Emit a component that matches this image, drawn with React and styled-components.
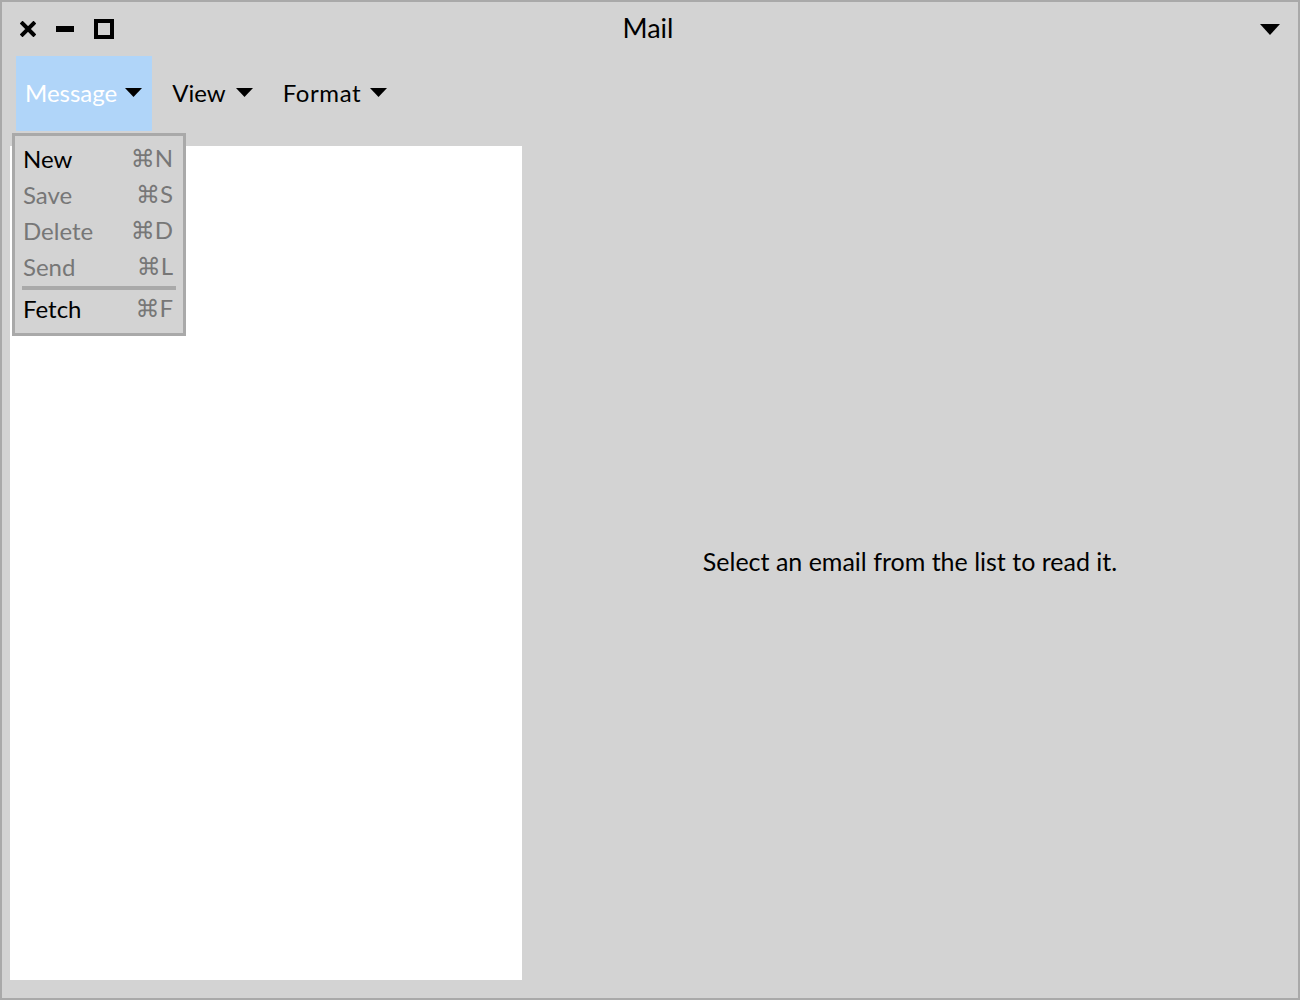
import React from "react";
import styled, { createGlobalStyle } from "styled-components";

const GlobalStyle = createGlobalStyle`
  html, body {
    margin: 0;
    padding: 0;
    background: #d3d3d3;
  }
  body {
    font-family: "Lato", "DejaVu Sans", sans-serif;
  }
`;

const Window = styled.div`
  position: relative;
  width: 1300px;
  height: 1000px;
  box-sizing: border-box;
  border: 2px solid #a9a9a9;
  background: #d3d3d3;
  display: flex;
  flex-direction: column;
  color: #000;
`;

const TitleBar = styled.div`
  height: 54px;
  display: grid;
  grid-template-columns: 1fr auto 1fr;
  align-items: center;
  padding: 0 18px;
`;

const Controls = styled.div`
  display: flex;
  align-items: center;
  gap: 20px;
`;

const Title = styled.div`
  font-size: 27px;
  line-height: 1;
  margin: 0 4px 4px 0;
`;

const TitleMenu = styled.div`
  display: flex;
  justify-content: flex-end;
`;

const MenuBar = styled.div`
  display: flex;
  height: 75px;
  padding-left: 14px;
  gap: 10px;
`;

const MenuItem = styled.div`
  display: flex;
  align-items: center;
  gap: ${({ $gap }) => $gap || 9}px;
  padding: 0 10px 2px ${({ $active }) => ($active ? 9 : 10)}px;
  font-size: 24px;
  letter-spacing: ${({ $spacing }) => $spacing || 0}px;
  background: ${({ $active }) => ($active ? "#b0d5f9" : "transparent")};
  color: ${({ $active }) => ($active ? "#fff" : "#000")};
`;

const CaretWrap = styled.span`
  display: flex;
  color: #000;
`;

const Body = styled.div`
  flex: 1;
  display: flex;
  padding: 15px 0 18px 8px;
`;

const ListPane = styled.div`
  width: 512px;
  background: #fff;
`;

const ReadPane = styled.div`
  flex: 1;
  display: flex;
  align-items: center;
  justify-content: center;
  font-size: 25px;
  padding-bottom: 4px;
`;

const Popup = styled.div`
  position: absolute;
  left: 10px;
  top: 131px;
  width: 174px;
  box-sizing: border-box;
  border: 3px solid #a9a9a9;
  background: #d3d3d3;
  padding: 5px 0 6px;
`;

const PopupRow = styled.div`
  height: 36px;
  display: flex;
  align-items: center;
  justify-content: space-between;
  padding: 0 10px 2px 8px;
  box-sizing: border-box;
  font-size: 24px;
  color: ${({ $disabled }) => ($disabled ? "#777" : "#000")};
`;

const Shortcut = styled.span`
  color: #777;
  font-size: 24px;
`;

const Separator = styled.div`
  height: 4px;
  margin: 1px 7px 1px 7px;
  background: #a9a9a9;
`;

const Caret = () => (
  <svg width="17" height="9" viewBox="0 0 17 9">
    <polygon points="0,0 17,0 8.5,9" fill="currentColor" />
  </svg>
);

const CloseIcon = () => (
  <svg width="16" height="16" viewBox="0 0 16 16">
    <path d="M2.5 2.5 L13.5 13.5 M13.5 2.5 L2.5 13.5" stroke="#000" strokeWidth="4" strokeLinecap="square" />
  </svg>
);

const MinIcon = () => (
  <svg width="18" height="18" viewBox="0 0 18 18">
    <rect x="0" y="6" width="18" height="6" fill="#000" />
  </svg>
);

const MaxIcon = () => (
  <svg width="20" height="20" viewBox="0 0 20 20">
    <rect x="2" y="2" width="16" height="16" fill="none" stroke="#000" strokeWidth="4" />
  </svg>
);

const items = [
  { label: "New", key: "⌘N" },
  { label: "Save", key: "⌘S", disabled: true },
  { label: "Delete", key: "⌘D", disabled: true },
  { label: "Send", key: "⌘L", disabled: true },
];

export default function App() {
  return (
    <>
      <GlobalStyle />
      <Window>
        <TitleBar>
          <Controls>
            <CloseIcon />
            <MinIcon />
            <MaxIcon />
          </Controls>
          <Title>Mail</Title>
          <TitleMenu>
            <svg width="20" height="11" viewBox="0 0 20 11">
              <polygon points="0,0 20,0 10,11" fill="#000" />
            </svg>
          </TitleMenu>
        </TitleBar>
        <MenuBar>
          <MenuItem $active $gap={8}>
            Message
            <CaretWrap>
              <Caret />
            </CaretWrap>
          </MenuItem>
          <MenuItem $gap={10}>
            View
            <CaretWrap>
              <Caret />
            </CaretWrap>
          </MenuItem>
          <MenuItem $spacing={0.6}>
            Format
            <CaretWrap>
              <Caret />
            </CaretWrap>
          </MenuItem>
        </MenuBar>
        <Body>
          <ListPane />
          <ReadPane>Select an email from the list to read it.</ReadPane>
        </Body>
        <Popup>
          {items.map((it) => (
            <PopupRow key={it.label} $disabled={it.disabled}>
              <span>{it.label}</span>
              <Shortcut>{it.key}</Shortcut>
            </PopupRow>
          ))}
          <Separator />
          <PopupRow>
            <span>Fetch</span>
            <Shortcut>⌘F</Shortcut>
          </PopupRow>
        </Popup>
      </Window>
    </>
  );
}
